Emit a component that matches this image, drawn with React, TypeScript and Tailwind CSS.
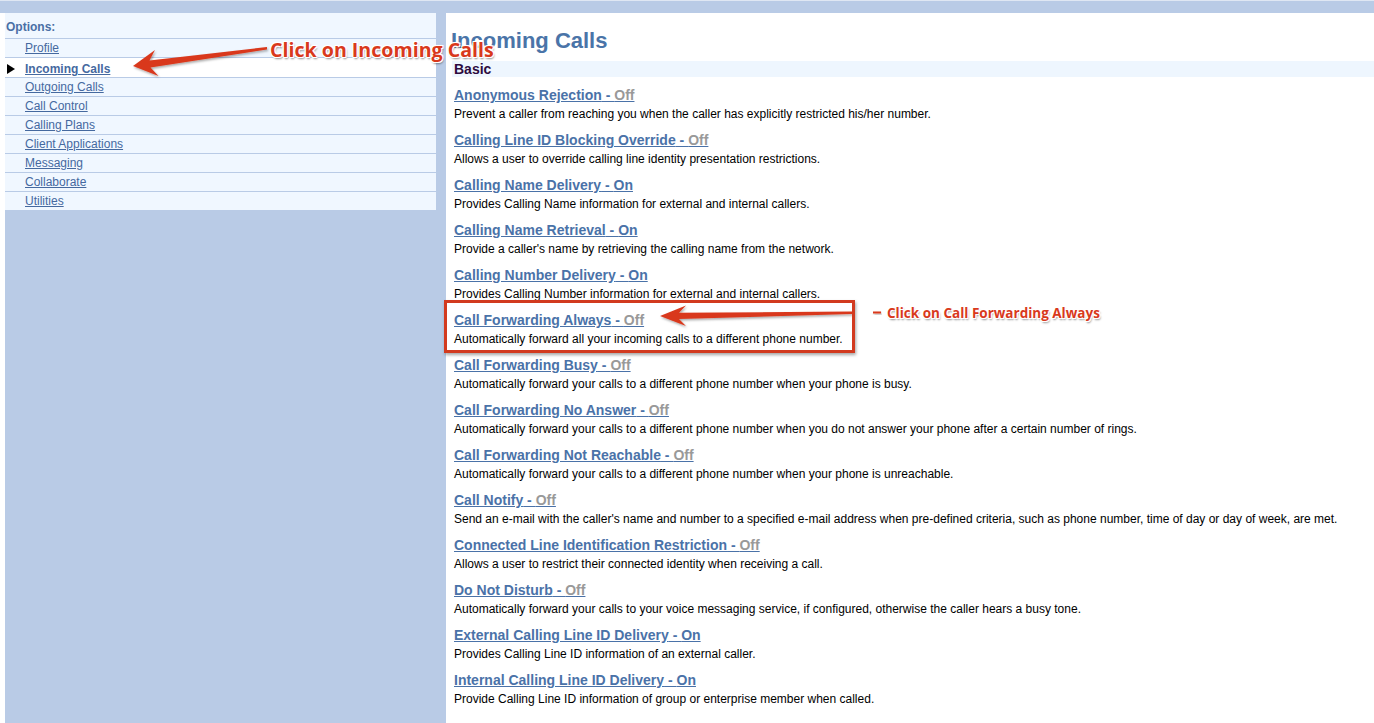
import React from 'react'

const navItems = [
  'Profile',
  'Incoming Calls',
  'Outgoing Calls',
  'Call Control',
  'Calling Plans',
  'Client Applications',
  'Messaging',
  'Collaborate',
  'Utilities',
]

interface Service {
  name: string
  on: boolean
  desc: string
}

const services: Service[] = [
  { name: 'Anonymous Rejection', on: false, desc: 'Prevent a caller from reaching you when the caller has explicitly restricted his/her number.' },
  { name: 'Calling Line ID Blocking Override', on: false, desc: 'Allows a user to override calling line identity presentation restrictions.' },
  { name: 'Calling Name Delivery', on: true, desc: 'Provides Calling Name information for external and internal callers.' },
  { name: 'Calling Name Retrieval', on: true, desc: "Provide a caller's name by retrieving the calling name from the network." },
  { name: 'Calling Number Delivery', on: true, desc: 'Provides Calling Number information for external and internal callers.' },
  { name: 'Call Forwarding Always', on: false, desc: 'Automatically forward all your incoming calls to a different phone number.' },
  { name: 'Call Forwarding Busy', on: false, desc: 'Automatically forward your calls to a different phone number when your phone is busy.' },
  { name: 'Call Forwarding No Answer', on: false, desc: 'Automatically forward your calls to a different phone number when you do not answer your phone after a certain number of rings.' },
  { name: 'Call Forwarding Not Reachable', on: false, desc: 'Automatically forward your calls to a different phone number when your phone is unreachable.' },
  { name: 'Call Notify', on: false, desc: "Send an e-mail with the caller's name and number to a specified e-mail address when pre-defined criteria, such as phone number, time of day or day of week, are met." },
  { name: 'Connected Line Identification Restriction', on: false, desc: 'Allows a user to restrict their connected identity when receiving a call.' },
  { name: 'Do Not Disturb', on: false, desc: 'Automatically forward your calls to your voice messaging service, if configured, otherwise the caller hears a busy tone.' },
  { name: 'External Calling Line ID Delivery', on: true, desc: 'Provides Calling Line ID information of an external caller.' },
  { name: 'Internal Calling Line ID Delivery', on: true, desc: 'Provide Calling Line ID information of group or enterprise member when called.' },
]

function Sidebar() {
  return (
    <div className="w-[431px] bg-[#f0f7ff] text-[12px]">
      <div className="h-[26px] pl-[1px] pt-[7px] font-bold leading-[15px] text-[#4a6fa5] border-b border-[#b9cbe6]">
        Options:
      </div>
      {navItems.map((item) => {
        const active = item === 'Incoming Calls'
        return (
          <div
            key={item}
            className={`relative pl-[20px] border-b border-[#b9cbe6] ${active ? 'h-[20px] bg-white pt-[2px] leading-[18px]' : 'h-[19px] leading-[19px]'}`}
          >
            {active && (
              <svg className="absolute left-[2px] top-[6px]" width="8" height="10" viewBox="0 0 8 10">
                <polygon points="0,0 8,5 0,10" fill="#000" />
              </svg>
            )}
            <a href="#" className={`text-[#45699f] underline ${active ? 'font-bold' : ''}`}>
              {item}
            </a>
          </div>
        )
      })}
    </div>
  )
}

function ServiceItem({ s }: { s: Service }) {
  return (
    <div className="pt-[9px]">
      <div className="h-[18px] text-[14px] font-bold leading-[18px]">
        <a href="#" className="text-[#4a72a8] underline">
          {s.name} - <span className={s.on ? '' : 'text-[#999999]'}>{s.on ? 'On' : 'Off'}</span>
        </a>
      </div>
      <div className="h-[18px] text-[12px] leading-[20px] text-black">{s.desc}</div>
    </div>
  )
}

const redText =
  "font-['Open_Sans',sans-serif] font-bold text-[#d9391c] whitespace-nowrap [text-shadow:-1px_-1px_0_#fff,1px_-1px_0_#fff,-1px_1px_0_#fff,1px_1px_0_#fff,0_0_2px_#fff,1px_2px_2px_rgba(0,0,0,0.45)]"

function Annotations() {
  return (
    <>
      <svg className="pointer-events-none absolute left-0 top-0" width="1374" height="723">
        <defs>
          <filter id="shade" x="-10%" y="-50%" width="120%" height="200%">
            <feDropShadow dx="1" dy="1.5" stdDeviation="1" floodColor="#000" floodOpacity="0.35" />
          </filter>
        </defs>
        <polygon
          filter="url(#shade)"
          fill="#d9391c"
          points="133,66 155,50 149.5,60.4 267,47 267,49.5 150.5,67.4 158.5,76"
        />
        <polygon
          filter="url(#shade)"
          fill="#d9391c"
          points="660,316 686,305.5 679,312.8 852,311.6 852,314 679,319 686,326"
        />
        <rect x="873" y="311.5" width="8" height="2" fill="#d9391c" filter="url(#shade)" />
      </svg>
      <div className="pointer-events-none absolute left-[444px] top-[300px] h-[53px] w-[411px] border-[3px] border-[#d23a1f] shadow-[1px_2px_3px_rgba(0,0,0,0.35)]" />
      <div className={`absolute left-[270px] top-[37px] text-[19.6px] leading-[26px] ${redText}`}>
        Click on Incoming Calls
      </div>
      <div className={`absolute left-[887px] top-[303px] text-[13.5px] leading-[20px] ${redText}`}>
        Click on Call Forwarding Always
      </div>
    </>
  )
}

export default function App() {
  return (
    <div className="relative flex h-screen flex-col overflow-hidden bg-white font-['Liberation_Sans',Arial,sans-serif]">
      <div className="h-[13px] shrink-0 border-t border-[#dfe7f3] bg-[#b9cbe6]" />
      <div className="flex min-h-0 flex-1">
        <div className="w-[5px] shrink-0 bg-white" />
        <div className="w-[441px] shrink-0 bg-[#b9cbe6]">
          <Sidebar />
        </div>
        <div className="flex-1 rounded-tl-[8px] bg-white pl-[6px]">
          <h1 className="pt-[14px] pb-[7px] pl-[-1px] text-[22px] font-bold leading-[27px] text-[#4a74a8] -ml-[1px]">Incoming Calls</h1>
          <div className="h-[16px] bg-[#eef6fe] pl-[2px] text-[14px] font-bold leading-[16px] text-[#2d0b3e]">Basic</div>
          <div className="pl-[2px]">
            {services.map((s) => (
              <ServiceItem key={s.name} s={s} />
            ))}
          </div>
        </div>
      </div>
      <Annotations />
    </div>
  )
}
